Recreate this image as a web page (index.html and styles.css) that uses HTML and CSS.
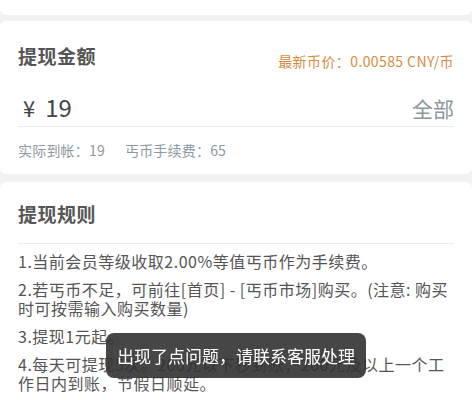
FILE: index.html
```html
<!DOCTYPE html>
<html>
<head>
    <title>提现</title>
    <link rel="stylesheet" href="styles.css">
</head>
<body>
    <div class="card card-top"></div>

    <!-- 提现金额 -->
    <div class="card amount-card">
        <div class="card-head">
            <h2 class="card-title">提现金额</h2>
            <span class="price">最新币价：0.00585 CNY/币</span>
        </div>
        <div class="amount-row">
            <span class="amount"><span class="yen">¥</span><span>19</span></span>
            <span class="all-btn">全部</span>
        </div>
        <div class="fee-row">
            <span>实际到帐：19</span>
            <span>丐币手续费：65</span>
        </div>
    </div>

    <!-- 提现规则 -->
    <div class="card rule-card">
        <h2 class="card-title rule-title">提现规则</h2>
        <ul class="rule-list">
            <li>1.当前会员等级收取2.00%等值丐币作为手续费。</li>
            <li>2.若丐币不足，可前往[首页] - [丐币市场]购买。(注意: 购买时可按需输入购买数量)</li>
            <li>3.提现1元起。</li>
            <li>4.每天可提现5次。200元以下秒到账，200元及以上一个工作日内到账，节假日顺延。</li>
        </ul>
    </div>

    <div class="toast">出现了点问题，请联系客服处理</div>
</body>
</html>
```

FILE: styles.css
```css
body { margin: 0; background: #f2f2f2; font-family: "Noto Sans CJK SC", "Noto Sans", sans-serif; color: #555; height: 400px; overflow: hidden; }
.card { background: #fff; border-radius: 6px; padding: 0 18px; }
.card-top { height: 15px; border-radius: 0 0 6px 6px; margin-bottom: 6px; }
.amount-card { padding-top: 22px; padding-bottom: 14px; margin-bottom: 8px; }
.card-head { display: flex; justify-content: space-between; align-items: flex-start; }
.card-title { margin: 0; font-size: 19px; line-height: 26px; font-weight: bold; color: #555; letter-spacing: 0.5px; }
.price { margin-top: 8px; font-size: 14px; line-height: 20px; color: #d98c3f; letter-spacing: 0.4px; }
.amount-row { display: flex; justify-content: space-between; align-items: center; margin-top: 22px; height: 30px; padding-bottom: 3px; border-bottom: 1px solid #ececec; }
.amount { display: flex; gap: 10px; align-items: baseline; font-size: 24px; line-height: 30px; color: #444; padding-left: 5px; margin-top: -3px; }
.yen { font-size: 22px; }
.all-btn { font-size: 21px; line-height: 30px; color: #8c969b; }
.fee-row { display: flex; gap: 20px; margin-top: 13px; font-size: 14px; line-height: 20px; color: #8e999f; letter-spacing: 0.2px; }
.rule-card { padding-top: 19px; padding-bottom: 20px; }
.rule-title { padding-bottom: 16px; border-bottom: 1px solid #ececec; }
.rule-list { list-style: none; margin: 8px 0 0; padding: 0; font-size: 16px; line-height: 19px; color: #555; letter-spacing: 0.5px; }
.rule-list li { margin-bottom: 9px; }
.toast { position: fixed; top: 333px; left: 50%; transform: translateX(-50%); padding: 10px 11px; font-size: 17px; line-height: 25px; color: #fff; background: rgba(50, 50, 50, 0.9); border-radius: 8px; white-space: nowrap; }
```
